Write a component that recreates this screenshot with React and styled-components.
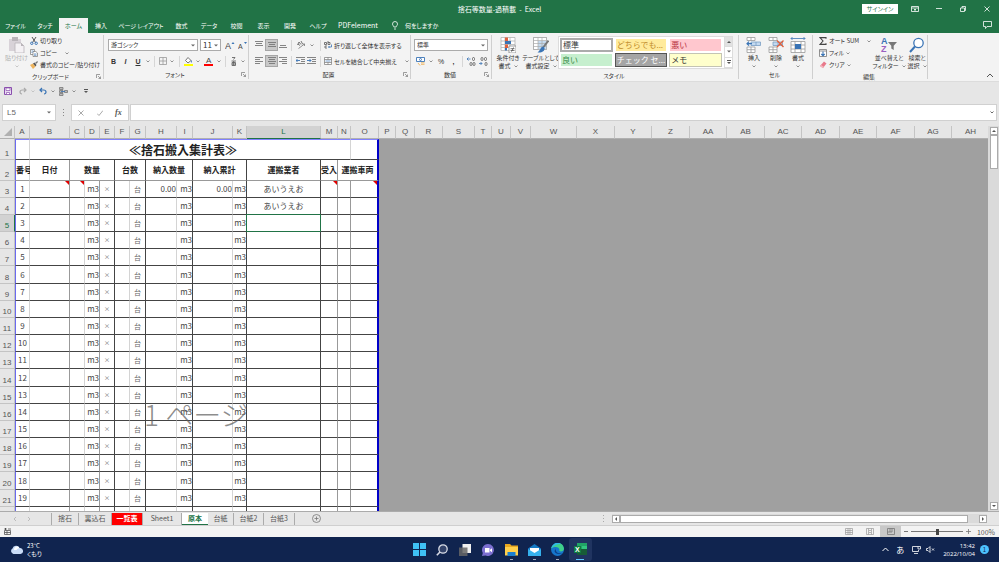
import React from "react";
import styled, { createGlobalStyle, css } from "styled-components";

const GlobalStyle = createGlobalStyle`
  * {
    box-sizing: border-box;
  }
  body {
    margin: 0;
    overflow: hidden;
    font-family: "Noto Sans CJK JP", sans-serif;
    font-size: 6px;
    font-feature-settings: "palt";
    color: #333;
  }
  button, input, select {
    margin: 0;
    padding: 0;
    border: 0;
    background: none;
    font: inherit;
    font-feature-settings: inherit;
    color: inherit;
    white-space: nowrap;
  }
`;

const Page = styled.div`
  display: flex;
  flex-direction: column;
  height: 100vh;
  background: #e6e6e6;
`;

/* ---------- title and tabs ---------- */

const TitleBar = styled.header`
  display: grid;
  grid-template-columns: 1fr auto 1fr;
  align-items: center;
  height: 17px;
  flex-shrink: 0;
  background: #217346;
  color: white;
`;
const Title = styled.h1`
  margin: 0;
  font-size: 7px;
  line-height: 16px;
  font-weight: 400;
  grid-column: 2;
  white-space: pre;
`;
const WindowControls = styled.div`
  display: flex;
  align-items: center;
  justify-content: flex-end;
`;
const SignIn = styled.button`
  width: 36px;
  height: 10px;
  margin-right: 5px;
  background: white;
  color: #217346;
  line-height: 10px;
`;
const WindowButton = styled.button`
  display: flex;
  justify-content: center;
  width: 24px;
`;
const TabBar = styled.nav`
  display: flex;
  align-items: stretch;
  height: 16px;
  flex-shrink: 0;
  background: #217346;
  color: white;
`;
const Tab = styled.button`
  width: ${(props) => props.$width}px;
  margin-top: 1px;
  font-size: ${(props) => (props.$latin ? 7 : 6)}px;
  line-height: 15px;
  text-align: center;
  ${(props) =>
    props.$active &&
    css`
      background: #f3f3f3;
      color: #217346;
    `}
`;
const TellMe = styled.button`
  display: flex;
  align-items: center;
  gap: 6px;
  margin-left: 8px;
`;
const CommentButton = styled.button`
  display: flex;
  align-items: center;
  margin: 0 7px 0 auto;
`;

/* ---------- ribbon ---------- */

const Ribbon = styled.section`
  display: flex;
  height: 49px;
  flex-shrink: 0;
  padding: 2px 0;
  background: #f3f3f3;
  border-bottom: 1px solid #dcdcdc;
`;
const GroupBox = styled.div`
  display: flex;
  flex-direction: column;
  width: ${(props) => props.$width}px;
  flex-shrink: 0;
  border-right: 1px solid #cfcfcf;
`;
const GroupBody = styled.div`
  display: flex;
  height: 37px;
  padding-left: ${(props) => props.$pad || 0}px;
`;
const GroupLabel = styled.div`
  display: grid;
  grid-template-columns: 1fr auto 1fr;
  align-items: center;
  justify-items: end;
  height: 10px;
  padding: 1px 2px 0 0;
  line-height: 9px;
  span {
    grid-column: 2;
  }
`;
const BigButton = styled.button`
  display: flex;
  flex-direction: column;
  align-items: center;
  width: ${(props) => props.$width}px;
  padding-top: 2px;
  line-height: 8px;
  color: ${(props) => (props.$off ? "#b0b0b0" : "#333")};
  svg {
    flex-shrink: 0;
  }
  > svg:last-child {
    margin-top: 3px;
  }
`;
const Line = styled.span`
  display: flex;
  align-items: center;
  gap: 3px;
  &:nth-child(2) {
    margin-top: 1px;
  }
`;
const Stack = styled.div`
  display: flex;
  flex-direction: column;
`;
const SmallButton = styled.button`
  display: flex;
  align-items: center;
  gap: 2px;
  height: 12px;
  line-height: 12px;
`;
const TwoRows = styled.div`
  display: flex;
  flex-direction: column;
  padding-top: 2px;
`;
const Row = styled.div`
  display: flex;
  align-items: center;
  height: 16px;
`;
const Tool = styled.button`
  display: flex;
  align-items: center;
  justify-content: center;
  width: ${(props) => props.$width || 13}px;
  height: 12px;
  font-family: "Liberation Sans", sans-serif;
  font-size: 7px;
  ${(props) =>
    props.$on &&
    css`
      background: #c8c8c8;
      border: 1px solid #a5a5a5;
    `}
`;
const WideTool = styled.button`
  display: flex;
  align-items: center;
  gap: 2px;
  height: 12px;
`;
const Gap = styled.span`
  width: 4px;
`;
const Divider = styled.span`
  width: 1px;
  height: 11px;
  margin: 0 3px;
  background: #d6d6d6;
`;
const Picker = styled.label`
  position: relative;
  width: ${(props) => props.$width}px;
  height: 12px;
  margin-right: 2px;
  background: white;
  border: 1px solid #ababab;
  select {
    display: block;
    width: 100%;
    height: 10px;
    padding: 0 2px;
    appearance: none;
    font-size: ${(props) => props.$size || 6}px;
    line-height: 10px;
  }
  svg {
    position: absolute;
    right: 2px;
    top: 4px;
  }
`;
const Gallery = styled.div`
  display: grid;
  grid-template-columns: 1fr 1fr 1fr 8px;
  grid-template-rows: 14px 14px;
  column-gap: 2px;
  row-gap: 1px;
  width: 175px;
  height: 33px;
  margin-top: 1px;
  padding: 1px 0 1px 1px;
  background: white;
  border: 1px solid #dcdcdc;
`;
const Swatch = styled.button`
  padding: 0 0 1px 1px;
  background: ${(props) => props.$bg};
  color: ${(props) => props.$color};
  border: ${(props) => props.$border || "1px solid white"};
  font-size: 8px;
  font-feature-settings: normal;
  line-height: 10px;
  text-align: left;
`;
const GalleryArrows = styled.div`
  grid-column: 4;
  grid-row: 1 / 3;
  display: flex;
  flex-direction: column;
  margin: -1px 0;
  border-left: 1px solid #dcdcdc;
  button {
    display: flex;
    flex: 1;
    align-items: center;
    justify-content: center;
    border-bottom: 1px solid #dcdcdc;
  }
  button:first-child {
    background: #e1e1e1;
  }
`;
const Collapse = styled.button`
  display: flex;
  align-self: flex-end;
  margin: 0 5px 1px auto;
`;

/* ---------- quick access and formula bar ---------- */

const QuickBar = styled.div`
  display: flex;
  align-items: center;
  gap: 4px;
  height: 18px;
  flex-shrink: 0;
  padding-left: 4px;
  button {
    display: flex;
    align-items: center;
    gap: 4px;
  }
  button:first-child {
    margin-right: 3px;
  }
  button:last-child {
    margin-left: 4px;
  }
`;
const FormulaBar = styled.div`
  display: flex;
  align-items: center;
  height: 26px;
  flex-shrink: 0;
  padding: 4px 2px 5px 2px;
`;
const NameBox = styled.label`
  display: flex;
  align-items: center;
  width: 54px;
  height: 17px;
  padding: 0 4px;
  background: white;
  border: 1px solid #d0d0d0;
  input {
    flex: 1;
    min-width: 0;
    font-family: "Liberation Sans", sans-serif;
    font-size: 8px;
    color: #666;
  }
`;
const Dots = styled.span`
  display: flex;
  justify-content: center;
  width: 15px;
`;
const FormulaButtons = styled.div`
  display: flex;
  align-items: center;
  justify-content: space-around;
  width: 58px;
  height: 17px;
  margin-right: 1px;
  background: white;
  border: 1px solid #d0d0d0;
  button {
    display: flex;
  }
  button:last-child {
    font: italic bold 8px "Liberation Serif", serif;
    color: #555;
  }
`;
const FormulaInput = styled.label`
  display: flex;
  align-items: center;
  flex: 1;
  height: 17px;
  padding-right: 2px;
  background: white;
  border: 1px solid #d0d0d0;
  input {
    flex: 1;
    font-size: 8px;
  }
`;

/* ---------- sheet ---------- */

const SheetArea = styled.main`
  display: flex;
  flex: 1;
  min-height: 0;
`;
const SheetView = styled.div`
  position: relative;
  flex: 1;
  min-width: 0;
  overflow: hidden;
  background: #a0a0a0;
`;
const Table = styled.table`
  width: ${(props) => props.$width}px;
  table-layout: fixed;
  border-collapse: separate;
  border-spacing: 0;
  font-size: 8px;
  font-feature-settings: normal;
  line-height: 10px;
  color: #444;
`;
const ColHead = styled.th`
  height: 13px;
  padding: 0;
  background: ${(props) => (props.$active ? "#d2d2d2" : "#e6e6e6")};
  border-right: 1px solid #c4c4c4;
  border-bottom: 1px solid ${(props) => (props.$active ? "#217346" : "#b0b0b0")};
  color: ${(props) => (props.$active ? "#217346" : "#555")};
  font-family: "Liberation Sans", sans-serif;
  font-weight: 400;
  svg {
    display: block;
    margin-left: 4px;
  }
`;
const RowHead = styled.th`
  padding: 0 0 1px;
  background: ${(props) => (props.$active ? "#d2d2d2" : "#e6e6e6")};
  border-right: 1px solid ${(props) => (props.$active ? "#217346" : "#c4c4c4")};
  border-bottom: 1px solid #c4c4c4;
  color: ${(props) => (props.$active ? "#217346" : "#555")};
  font-family: "Liberation Sans", sans-serif;
  font-weight: 400;
  line-height: 9px;
  vertical-align: bottom;
`;
const SheetRow = styled.tr`
  height: ${(props) => props.$height}px;
`;
const lines = {
  light: "1px solid #d4d4d4",
  mid: "1px solid #999",
  dark: "1px solid #444",
  blue: "2px solid #0000c8",
};
const Cell = styled.td`
  position: relative;
  padding: 0;
  background: white;
  text-align: ${(props) => props.$align || "center"};
  border-right: ${(props) => lines[props.$line]};
  border-bottom: ${(props) => lines[props.$bottom || "dark"]};
  white-space: nowrap;
  ${(props) =>
    props.$first &&
    css`
      border-left: 1px solid #6a6af0;
    `}
  ${(props) =>
    props.$top &&
    css`
      border-top: 1px solid #8080ff;
    `}
  ${(props) =>
    props.$bold &&
    css`
      color: #222;
      font-weight: 700;
    `}
  ${(props) =>
    props.$small &&
    css`
      color: #666;
      font-size: ${props.$small}px;
    `}
  ${(props) =>
    props.$active &&
    css`
      border-color: #217346;
      box-shadow: -1px 0 #217346, 0 -1px #217346, -1px -1px #217346;
      z-index: 1;
    `}
`;
const TitleCell = styled(Cell)`
  padding-right: 14px;
  font-size: 12px;
  line-height: 16px;
`;
const Note = styled.span`
  position: absolute;
  top: 0;
  right: 0;
  border-top: 4px solid #e00000;
  border-left: 4px solid transparent;
`;
const PageMark = styled.div`
  position: absolute;
  left: 144px;
  top: 274px;
  width: 104px;
  overflow: hidden;
  font-size: 28px;
  font-weight: 300;
  font-feature-settings: normal;
  line-height: 28px;
  white-space: nowrap;
  color: rgba(90, 90, 90, 0.7);
  pointer-events: none;
`;
const VScroll = styled.div`
  display: flex;
  flex-direction: column;
  width: 11px;
  padding: 1px 2px;
  background: #dadada;
`;
const ScrollButton = styled.button`
  display: flex;
  align-items: center;
  justify-content: center;
  width: 8px;
  height: 8px;
  background: white;
  border: 1px solid #ababab;
`;
const VThumb = styled.div`
  width: 8px;
  height: 34px;
  margin-bottom: auto;
  background: white;
  border: 1px solid #ababab;
`;

/* ---------- sheet tabs and status ---------- */

const SheetTabs = styled.div`
  display: flex;
  align-items: center;
  height: 15px;
  flex-shrink: 0;
  padding-right: 12px;
  border-top: 1px solid #ababab;
  border-bottom: 1px solid #cfcfcf;
`;
const TabArrows = styled.div`
  display: flex;
  align-items: center;
  gap: 10px;
  width: 52px;
  height: 12px;
  padding-left: 13px;
  border-right: 1px solid #ababab;
`;
const SheetTab = styled.button`
  width: ${(props) => props.$width}px;
  height: 12px;
  border-right: 1px solid #ababab;
  font-size: 7px;
  line-height: 11px;
  color: #555;
  ${(props) =>
    props.$red &&
    css`
      background: #ff0000;
      color: white;
      font-weight: 700;
    `}
  ${(props) =>
    props.$active &&
    css`
      background: white;
      color: #217346;
      font-weight: 700;
      border-right: 0;
      border-bottom: 1px solid #217346;
    `}
`;
const AddSheet = styled.button`
  display: flex;
  margin: 0 auto 0 17px;
`;
const HScroll = styled.div`
  display: flex;
  align-items: center;
  width: 38%;
  height: 9px;
  background: #dadada;
`;
const HThumb = styled.div`
  flex: 1;
  height: 8px;
  margin-right: 11px;
  background: white;
  border: 1px solid #ababab;
`;
const StatusBar = styled.footer`
  display: flex;
  align-items: center;
  height: 11px;
  flex-shrink: 0;
  padding: 0 4px;
  background: #f3f3f3;
`;
const MacroButton = styled.button`
  display: flex;
  margin-right: auto;
`;
const ViewButton = styled.button`
  display: flex;
  align-items: center;
  justify-content: center;
  width: 21px;
  height: 11px;
  background: ${(props) => (props.$on ? "#c8c8c8" : "none")};
`;
const ZoomButton = styled.button`
  display: flex;
  padding-left: ${(props) => props.$pad || 0}px;
`;
const Zoom = styled.input`
  width: 52px;
  height: 9px;
  margin: 0 3px;
  appearance: none;
  background: linear-gradient(#777, #777) center / 100% 1px no-repeat;
  &::-webkit-slider-thumb {
    appearance: none;
    width: 3px;
    height: 6px;
    background: #444;
  }
`;
const ZoomText = styled.span`
  width: 24px;
  font-size: 7px;
  line-height: 10px;
  text-align: right;
  color: #555;
`;

/* ---------- taskbar ---------- */

const Taskbar = styled.footer`
  display: grid;
  grid-template-columns: 1fr auto 1fr;
  align-items: center;
  height: 25px;
  flex-shrink: 0;
  background: #10244f;
  color: white;
`;
const Weather = styled.div`
  display: flex;
  align-items: center;
  gap: 4px;
  padding-left: 10px;
  line-height: 8px;
`;
const Apps = styled.div`
  display: flex;
`;
const TaskButton = styled.button`
  display: flex;
  align-items: center;
  justify-content: center;
  position: relative;
  width: 23px;
  height: 23px;
  border-radius: 3px;
  background: ${(props) => (props.$active ? "#203460" : "none")};
  &::after {
    content: "";
    position: absolute;
    bottom: 1px;
    width: ${(props) => (props.$active ? 8 : 3)}px;
    height: 1px;
    background: ${(props) => (props.$active ? "#5cc8ff" : props.$open ? "#a0a8b8" : "none")};
  }
`;
const Tray = styled.div`
  display: flex;
  align-items: center;
  justify-content: flex-end;
  gap: 5px;
  padding-right: 10px;
`;
const Ime = styled.span`
  margin: 0 3px 0 2px;
  font-size: 8px;
`;
const Clock = styled.div`
  margin-left: 3px;
  font-family: "Open Sans", sans-serif;
  line-height: 8px;
  text-align: right;
`;
const Badge = styled.span`
  width: 9px;
  height: 9px;
  border-radius: 50%;
  background: #4cc2ff;
  color: #10244f;
  line-height: 9px;
  text-align: center;
`;

/* ---------- icons ---------- */

const Icon = ({ size = 8, width, height, children, ...rest }) => (
  <svg
    width={width || size}
    height={height || size}
    viewBox={`0 0 ${width || size} ${height || size}`}
    fill="none"
    stroke="#555"
    aria-hidden="true"
    {...rest}
  >
    {children}
  </svg>
);
const Letter = styled.text`
  font-family: "Liberation Sans", sans-serif;
  font-size: ${(props) => props.$size}px;
  font-weight: ${(props) => (props.$bold ? 700 : 400)};
  fill: ${(props) => props.$color || "#444"};
  stroke: none;
`;
const Chevron = ({ color = "#777" }) => (
  <Icon width={4} height={3} stroke={color}>
    <path d="M.5 .5L2 2L3.500 .5" strokeWidth=".8" />
  </Icon>
);
const Down = () => (
  <Icon width={4} height={3} stroke="none">
    <path d="M0 .5H4L2 2.500Z" fill="#666" />
  </Icon>
);
const Launcher = () => (
  <Icon size={5} stroke="#777" strokeWidth=".7">
    <path d="M.5 4V.5H4M2 2L4.500 4.500M4.500 2.500V4.500H2.500" />
  </Icon>
);
const PasteIcon = () => (
  <Icon size={16} stroke="none">
    <path d="M0 2H12V14H0Z" fill="#d8d2d8" />
    <path d="M3 0H9V4H3Z" fill="#b9b4b9" />
    <path d="M6 6H12L15 9V16H6Z" fill="#f4f1f4" stroke="#b9b4b9" strokeWidth=".8" />
    <path d="M12 6V9H15Z" fill="#b9b4b9" />
  </Icon>
);
const ScissorsIcon = () => (
  <Icon strokeWidth="1">
    <path d="M2 0L5.500 5.500M6 0L2.500 5.500" />
    <circle cx="1.800" cy="6.300" r="1.200" stroke="#3a74b5" />
    <circle cx="6.200" cy="6.300" r="1.200" stroke="#3a74b5" />
  </Icon>
);
const CopyIcon = () => (
  <Icon strokeWidth=".7" stroke="#777">
    <path d="M.5 .5H4.500V5.500H.5Z" fill="white" />
    <path d="M3 2.500H5.800L7.500 4V7.500H3Z" fill="white" />
    <path d="M1.500 2H3.500M1.500 3.500H2.500M4 5H6.500M4 6.300H6.500" stroke="#3a74b5" />
  </Icon>
);
const BrushIcon = () => (
  <Icon stroke="none">
    <path d="M0 4L3 2.500L5.500 5.500L3 8Z" fill="#edb35c" />
    <path d="M3 2.500L4.500 1.500L6.500 4L5.500 5.500Z" fill="#555" />
    <path d="M5 2L7.200 0L8 1L6 3Z" fill="#777" />
  </Icon>
);
const FillIcon = () => (
  <Icon size={9} strokeWidth=".8">
    <path d="M4 .5L7 3.500L4 6L1.500 3.500Z" fill="white" />
    <path d="M7.500 3.500V5.500" stroke="#3a74b5" />
    <path d="M0 7H9V9H0Z" fill="#ffff00" stroke="none" />
  </Icon>
);
const FontColorIcon = () => (
  <Icon size={9}>
    <Letter $size={8} x="2" y="6">A</Letter>
    <path d="M0 7H9V9H0Z" fill="#ff0000" stroke="none" />
  </Icon>
);
const BordersIcon = () => (
  <Icon stroke="#999" strokeWidth=".8">
    <path d="M.5 .5H7.500V7.500H.5ZM4 .5V7.500M.5 4H7.500" />
  </Icon>
);
const GrowIcon = ({ down }) => (
  <Icon width={10} height={9}>
    <Letter $size={down ? 7 : 9} x="0" y="8">A</Letter>
    <path d={down ? "M6 1H9L7.500 3Z" : "M6.500 3H9.500L8 1Z"} fill="#3a74b5" stroke="none" />
  </Icon>
);
const RubyIcon = () => (
  <Icon size={9} strokeWidth=".8">
    <path d="M3 .5H6L4.500 2.500M2.500 4H7M3 5.500H6.500V8.500H3ZM3 7H6.500M4.700 4V8.500" />
  </Icon>
);
// bars: list of [x, width] from top to bottom
const BarsIcon = ({ bars, y = 0 }) => (
  <Icon stroke="#777">
    {bars.map(([x, w], i) => (
      <path key={i} d={`M${x} ${y + i * 2 + 0.5}h${w}`} strokeWidth=".9" />
    ))}
  </Icon>
);
const AngleIcon = () => (
  <Icon strokeWidth=".8">
    <path d="M1.500 7.500L7.500 3M7.500 3V5M7.500 3H5.500" stroke="#777" />
    <path d="M.5 4L2 1L4 3.500M1 3L3 4.500M4 0L5.500 3" />
  </Icon>
);
const WrapIcon = () => (
  <Icon strokeWidth=".8">
    <path d="M.5 1.500H2.500V3.500H.5ZM4 0V3.500H6V1.500H4M3 5H1V7H3" />
    <path d="M7.500 3.500V6H4.500M5.500 5L4.500 6L5.500 7" stroke="#3a74b5" />
  </Icon>
);
const MergeIcon = () => (
  <Icon strokeWidth=".7" stroke="#777">
    <path d="M.5 .5H7.500V7.500H.5ZM.5 2.500H7.500M.5 5.500H7.500M4 .5V2.500M4 5.500V7.500" fill="white" />
    <path d="M1.500 4H6.500" stroke="#3a74b5" />
  </Icon>
);
const IndentIcon = ({ out }) => (
  <Icon width={9} height={8} stroke="#777" strokeWidth=".9">
    <path d="M0 .5H9M5 2.500H9M5 4.500H9M0 6.500H9" />
    <path d={out ? "M4 3.500H0M1.500 2L0 3.500L1.500 5" : "M0 3.500H4M2.500 2L4 3.500L2.500 5"} stroke="#3a74b5" />
  </Icon>
);
const MoneyIcon = () => (
  <Icon size={9} strokeWidth=".9">
    <path d="M.5 .5H8.500V4.500H.5Z" stroke="#3a74b5" fill="white" />
    <circle cx="4.500" cy="2.500" r="1" stroke="#3a74b5" />
    <path d="M5 5.800H8.500M5 7.300H8.500M2 6L4 8.500" stroke="#edb35c" />
  </Icon>
);
const DecimalIcon = ({ less }) => (
  <Icon size={9} strokeWidth=".8">
    <path d={less ? "M0 6.500H3M1.500 5L3 6.500L1.500 8" : "M3.500 2H0M1.500 .5L0 2L1.500 3.500"} stroke="#3a74b5" />
    <rect x="5.500" y=".5" width="2" height="3" rx="1" />
    <rect x="6" y="5.500" width="2" height="3" rx="1" />
    {less ? (
      <rect x="2" y=".5" width="2" height="3" rx="1" />
    ) : (
      <rect x="3" y="5.500" width="2" height="3" rx="1" />
    )}
  </Icon>
);
const CondIcon = () => (
  <Icon size={16} strokeWidth=".7" stroke="#aaa">
    <path d="M1 .5H15V13.500H1ZM5 .5V13.500M10 .5V13.500M1 4H15M1 7.500H15M1 10.500H15" fill="white" />
    <path d="M5 .5H8V4H5ZM5 7.500H8V11H5Z" fill="#e0603c" stroke="none" />
    <path d="M5 4H11V7H5ZM5 11H7V13.500H5Z" fill="#3a74b5" stroke="none" />
    <path d="M9 9H16V16H9Z" fill="white" stroke="#777" />
    <path d="M10.500 11.700H14.500M10.500 13.500H14.500M13.500 10.500L11.500 14.700" stroke="#444" />
  </Icon>
);
const TableIcon = () => (
  <Icon size={16} strokeWidth=".7" stroke="#aaa">
    <path d="M.5 .5H13.500V12.500H.5Z" fill="white" />
    <path d="M5 4H13.500V12.500H5Z" fill="#c4daf0" stroke="none" />
    <path d="M.5 .5H13.500V12.500H.5ZM5 .5V12.500M9 .5V12.500M.5 3.500H13.500M.5 6.500H13.500M.5 9.500H13.500" />
    <path d="M15.500 3.500L10.500 10" stroke="#777" strokeWidth="2" />
    <path d="M10.500 9.500C7 10 8 13 4.500 15.500C9 16 12 14 11.500 11Z" fill="#3a74b5" stroke="none" />
  </Icon>
);
const CellsIcon = ({ kind }) => (
  <Icon size={16} strokeWidth=".8" stroke="#999">
    {kind === "format" ? (
      <>
        <path d="M1 4.500H15V15.500H1ZM5 4.500V15.500M11 4.500V15.500M1 8H15M1 12H15" fill="white" />
        <path d="M5 7H11V12H5Z" fill="#3a74b5" stroke="none" />
        <path d="M1 1.500H15M2.500 0L1 1.500L2.500 3M13.500 0L15 1.500L13.500 3" stroke="#3a74b5" />
      </>
    ) : (
      <>
        <path d="M1 .5H9V3.500H1ZM5 .5V3.500M1 10H9V15.500H1ZM5 10V15.500M1 12.700H9" fill="white" />
        <path d="M5 5H14.500V8.500H5ZM10 5V8.500" fill="#c4daf0" stroke="#7a9ec4" />
        {kind === "insert" ? (
          <path d="M6 6.700H1M3 4.700L1 6.700L3 8.700" stroke="#3a74b5" strokeWidth="1.200" />
        ) : (
          <path d="M9 3.500L15.500 10M15.500 3.500L9 10" stroke="#e0603c" strokeWidth="1.400" />
        )}
      </>
    )}
  </Icon>
);
const SigmaIcon = () => (
  <Icon>
    <path d="M7 1.800V.6H1L4 4L1 7.400H7V6.200" stroke="#444" strokeWidth="1.100" />
  </Icon>
);
const FillDownIcon = () => (
  <Icon strokeWidth=".8" stroke="#777">
    <path d="M.5 .5H7.500V7.500H.5ZM.5 2H7.500" fill="white" />
    <path d="M4 2.500V6.500M2.300 5L4 6.700L5.700 5" stroke="#3a74b5" strokeWidth="1.100" />
  </Icon>
);
const EraserIcon = () => (
  <Icon stroke="none">
    <path d="M5 .5L7.500 2.500L4 7L1 5Z" fill="#e8788a" />
    <path d="M2 3.800L5 6L4 7.300L1 5.200Z" fill="#f4b3bc" />
  </Icon>
);
const SortIcon = () => (
  <Icon size={16}>
    <Letter $size={9} $bold $color="#3a74b5" x="0" y="7">A</Letter>
    <Letter $size={9} $bold $color="#9a5fc0" x="0" y="15">Z</Letter>
    <path d="M7 5H16L12.700 8.700V13L10.300 11.500V8.700Z" fill="#777" stroke="none" />
  </Icon>
);
const FindIcon = () => (
  <Icon size={16} stroke="#3a74b5">
    <circle cx="9.500" cy="6" r="4.700" strokeWidth="1.300" fill="white" />
    <path d="M6 9.500L1 15" strokeWidth="2" />
  </Icon>
);
const SaveIcon = () => (
  <Icon stroke="#8a4fae">
    <path d="M.5 .5H7.500V7.500H.5Z" fill="#e9dcf2" />
    <path d="M2 1H6V3.500H2ZM2.500 5.500H5.500V7.500H2.500Z" fill="white" strokeWidth=".7" />
  </Icon>
);
const TurnIcon = ({ color, flip }) => (
  <Icon stroke={color} strokeWidth="1.200">
    <path d={flip ? "M7 3H3.500C0 3 .5 7 3 7M5 1L7 3L5 5" : "M1 3H4.500C8 3 7.500 7 5 7M3 1L1 3L3 5"} />
  </Icon>
);
const MoreIcon = () => (
  <Icon size={9} strokeWidth=".8" stroke="#777">
    <path d="M.5 .5H4V2.500H.5ZM.5 6.500H4V8.500H.5ZM.5 3.500H4V5.500H.5ZM5.500 3.500H8.500V5.500H5.500Z" fill="#bbb" />
    <path d="M6 4.500H2" stroke="#3a74b5" />
  </Icon>
);
const ScrollArrow = ({ d }) => (
  <Icon size={4} stroke="none">
    <path d={d} fill="#555" />
  </Icon>
);

/* ---------- data ---------- */

const tabs = [
  ["ファイル", 31],
  ["タッチ", 28],
  ["ホーム", 29],
  ["挿入", 26],
  ["ページ レイアウト", 54],
  ["数式", 27],
  ["データ", 28],
  ["校閲", 27],
  ["表示", 27],
  ["開発", 26],
  ["ヘルプ", 30],
  ["PDFelement", 50],
];

const columns = [
  ["A", 15], ["B", 40], ["C", 15], ["D", 15], ["E", 15], ["F", 15], ["G", 16],
  ["H", 31], ["I", 16], ["J", 40], ["K", 14], ["L", 74], ["M", 17], ["N", 13],
  ["O", 28], ["P", 17], ["Q", 19], ["R", 28], ["S", 32], ["T", 17], ["U", 19],
  ["V", 20], ["W", 46], ["X", 38], ["Y", 37], ["Z", 38], ["AA", 37], ["AB", 38],
  ["AC", 37], ["AD", 38], ["AE", 37], ["AF", 38], ["AG", 37], ["AH", 38],
];
const tableWidth = columns.reduce((sum, col) => sum + col[1], 15);

const rows = Array.from({ length: 19 }, (_, i) => ({
  number: i + 3,
  index: i + 1,
  height: i % 6 === 5 ? 18 : 17,
  amount: i === 0 ? "0.00" : "",
  carrier: i < 2 ? "あいうえお" : "",
  unit: "m3",
  sign: "×",
  truck: "台",
}));
// the next row is empty and runs under the sheet tabs
rows.push({ height: 17 });

const swatches = [
  ["標準", "white", "#333", "2px solid #ababab"],
  ["どちらでも...", "#ffeb9c", "#c08a28"],
  ["悪い", "#ffc7ce", "#b8303c"],
  ["良い", "#c6efce", "#3a8a48"],
  ["チェック セ...", "#a5a5a5", "white", "1px solid #555"],
  ["メモ", "#ffffcc", "#333", "1px solid #c4c4b4"],
];

const sheets = [
  ["捨石", 27],
  ["裏込石", 33],
  ["一覧表", 31],
  ["Sheet1", 39],
  ["原本", 26],
  ["台紙", 26],
  ["台紙2", 30],
  ["台紙3", 31],
];

/* ---------- components ---------- */

const Group = ({ label, width, pad, launcher, children }) => (
  <GroupBox $width={width}>
    <GroupBody $pad={pad}>{children}</GroupBody>
    <GroupLabel>
      <span>{label}</span>
      {launcher && <Launcher />}
    </GroupLabel>
  </GroupBox>
);

const RibbonBar = () => (
  <Ribbon>
    <Group label="クリップボード" width={104} pad={3} launcher>
      <BigButton $width={27} $off>
        <PasteIcon />
        <Line>貼り付け</Line>
        <Chevron color="#bbb" />
      </BigButton>
      <Stack>
        <SmallButton><ScissorsIcon />切り取り</SmallButton>
        <SmallButton><CopyIcon />コピー<Gap /><Chevron /></SmallButton>
        <SmallButton><BrushIcon />書式のコピー/貼り付け</SmallButton>
      </Stack>
    </Group>
    <Group label="フォント" width={145} pad={4} launcher>
      <TwoRows>
        <Row>
          <Picker $width={90}>
            <select aria-label="フォント"><option>游ゴシック</option></select>
            <Down />
          </Picker>
          <Picker $width={21} $size={8}>
            <select aria-label="サイズ"><option>11</option></select>
            <Down />
          </Picker>
          <Tool><GrowIcon /></Tool>
          <Tool><GrowIcon down /></Tool>
        </Row>
        <Row>
          <Tool $width={11}><b>B</b></Tool>
          <Tool><b><i>I</i></b></Tool>
          <Tool $width={12}><b><u>U</u></b></Tool>
          <Tool $width={7}><Chevron /></Tool>
          <Divider />
          <Tool $width={10}><BordersIcon /></Tool>
          <Tool $width={8}><Chevron /></Tool>
          <Divider />
          <Tool $width={11}><FillIcon /></Tool>
          <Tool $width={8}><Chevron /></Tool>
          <Tool><FontColorIcon /></Tool>
          <Tool $width={7}><Chevron /></Tool>
          <Divider />
          <Tool $width={9}><RubyIcon /></Tool>
          <Tool $width={9}><Chevron /></Tool>
        </Row>
      </TwoRows>
    </Group>
    <Group label="配置" width={162} pad={3} launcher>
      <TwoRows>
        <Row>
          <Tool><BarsIcon bars={[[0, 8], [1, 6], [0, 8]]} /></Tool>
          <Tool $on><BarsIcon bars={[[0, 8], [1, 6], [0, 8]]} y={1} /></Tool>
          <Tool $width={10}><BarsIcon bars={[[1, 6], [0, 8]]} y={4} /></Tool>
          <Divider />
          <Tool $width={11}><AngleIcon /></Tool>
          <Tool $width={11}><Chevron /></Tool>
          <Divider />
          <WideTool><WrapIcon />折り返して全体を表示する</WideTool>
        </Row>
        <Row>
          <Tool><BarsIcon bars={[[0, 8], [0, 5], [0, 8], [0, 5]]} /></Tool>
          <Tool $on><BarsIcon bars={[[0, 8], [1, 6], [0, 8], [1, 6]]} /></Tool>
          <Tool $width={10}><BarsIcon bars={[[0, 8], [3, 5], [0, 8], [3, 5]]} /></Tool>
          <Divider />
          <Tool $width={11}><IndentIcon out /></Tool>
          <Tool $width={11}><IndentIcon /></Tool>
          <Divider />
          <WideTool><MergeIcon />セルを結合して中央揃え<Gap /><Chevron /></WideTool>
        </Row>
      </TwoRows>
    </Group>
    <Group label="数値" width={81} pad={3} launcher>
      <TwoRows>
        <Row>
          <Picker $width={74}>
            <select aria-label="表示形式"><option>標準</option></select>
            <Down />
          </Picker>
        </Row>
        <Row>
          <Tool><MoneyIcon /></Tool>
          <Tool $width={7}><Chevron /></Tool>
          <Tool $width={14}>%</Tool>
          <Tool $width={11}><b>,</b></Tool>
          <Divider />
          <Tool $width={10}><DecimalIcon /></Tool>
          <Tool $width={14}><DecimalIcon less /></Tool>
        </Row>
      </TwoRows>
    </Group>
    <Group label="スタイル" width={247}>
      <BigButton $width={32}>
        <CondIcon />
        <Line>条件付き</Line>
        <Line>書式<Chevron /></Line>
      </BigButton>
      <BigButton $width={34}>
        <TableIcon />
        <Line>テーブルとして</Line>
        <Line>書式設定<Chevron /></Line>
      </BigButton>
      <Gallery>
        {swatches.map(([name, bg, color, border]) => (
          <Swatch key={name} $bg={bg} $color={color} $border={border}>
            {name}
          </Swatch>
        ))}
        <GalleryArrows>
          <button aria-label="前の行"><ScrollArrow d="M0 3H4L2 1Z" /></button>
          <button aria-label="次の行"><Down /></button>
          <button aria-label="その他"><ScrollArrow d="M0 0H4V1H0ZM0 2H4L2 4Z" /></button>
        </GalleryArrows>
      </Gallery>
    </Group>
    <Group label="セル" width={74} pad={4}>
      <BigButton $width={22}>
        <CellsIcon kind="insert" />
        <Line>挿入</Line>
        <Chevron />
      </BigButton>
      <BigButton $width={22}>
        <CellsIcon kind="delete" />
        <Line>削除</Line>
        <Chevron />
      </BigButton>
      <BigButton $width={22}>
        <CellsIcon kind="format" />
        <Line>書式</Line>
        <Chevron />
      </BigButton>
    </Group>
    <Group label="編集" width={115} pad={6}>
      <Stack>
        <SmallButton><SigmaIcon />オート SUM<Gap /><Chevron /></SmallButton>
        <SmallButton><FillDownIcon />フィル<Chevron /></SmallButton>
        <SmallButton><EraserIcon />クリア<Chevron /></SmallButton>
      </Stack>
      <BigButton $width={36}>
        <SortIcon />
        <Line>並べ替えと</Line>
        <Line>フィルター<Chevron /></Line>
      </BigButton>
      <BigButton $width={20}>
        <FindIcon />
        <Line>検索と</Line>
        <Line>選択<Chevron /></Line>
      </BigButton>
    </Group>
    <Collapse aria-label="リボンを折りたたむ">
      <Icon width={8} height={5}><path d="M1 4L4 1L7 4" /></Icon>
    </Collapse>
  </Ribbon>
);

const DataRow = ({ row }) => {
  const first = row.index === 1;
  return (
    <SheetRow $height={row.height}>
      <RowHead $active={row.number === 5}>{row.number}</RowHead>
      <Cell $first $line="light">{row.index}</Cell>
      <Cell $line="mid">{first && <Note />}</Cell>
      <Cell $line="light">{first && <Note />}</Cell>
      <Cell $line="mid" $align="right">{row.unit}</Cell>
      <Cell $line="dark" $small={6}>{row.sign}</Cell>
      <Cell $line="light" />
      <Cell $line="dark" $small={7}>{row.truck}</Cell>
      <Cell $line="light" $align="right">{row.amount}</Cell>
      <Cell $line="dark" $align="right">{row.unit}</Cell>
      <Cell $line="light" $align="right">{row.amount}</Cell>
      <Cell $line="dark" $align="right">{row.unit}</Cell>
      <Cell $line="dark" $active={row.number === 5}>{row.carrier}</Cell>
      <Cell $line="mid">{first && <Note />}</Cell>
      <Cell $line="mid" />
      <Cell $line="blue">{first && <Note />}</Cell>
    </SheetRow>
  );
};

const Sheet = () => (
  <SheetView>
    <Table $width={tableWidth}>
      <colgroup>
        <col width={15} />
        {columns.map(([id, width]) => (
          <col key={id} width={width} />
        ))}
      </colgroup>
      <thead>
        <tr>
          <ColHead>
            <Icon stroke="none"><path d="M8 0V8H0Z" fill="#b0b0b0" /></Icon>
          </ColHead>
          {columns.map(([id]) => (
            <ColHead key={id} $active={id === "L"}>{id}</ColHead>
          ))}
        </tr>
      </thead>
      <tbody>
        <SheetRow $height={21}>
          <RowHead>1</RowHead>
          <Cell $first $top $line="light" />
          <TitleCell $top $bold $line="light" colSpan={13}>≪捨石搬入集計表≫</TitleCell>
          <Cell $top $line="blue" />
        </SheetRow>
        <SheetRow $height={21}>
          <RowHead>2</RowHead>
          <Cell $first $bold $line="light" $bottom="mid">番号</Cell>
          <Cell $bold $line="mid" $bottom="mid">日付</Cell>
          <Cell $bold $line="dark" $bottom="mid" colSpan={3}>数量</Cell>
          <Cell $bold $line="dark" $bottom="mid" colSpan={2}>台数</Cell>
          <Cell $bold $line="dark" $bottom="mid" colSpan={2}>納入数量</Cell>
          <Cell $bold $line="dark" $bottom="mid" colSpan={2}>納入累計</Cell>
          <Cell $bold $line="dark" $bottom="mid">運搬業者</Cell>
          <Cell $bold $line="mid" $bottom="mid">受入</Cell>
          <Cell $bold $line="blue" $bottom="mid" colSpan={2}>運搬車両</Cell>
        </SheetRow>
        {rows.map((row, i) => (
          <DataRow key={i} row={row} />
        ))}
      </tbody>
    </Table>
    <PageMark>1 ページ</PageMark>
  </SheetView>
);

const App = () => (
  <Page>
    <GlobalStyle />
    <TitleBar>
      <Title>捨石等数量-過積載  -  Excel</Title>
      <WindowControls>
        <SignIn>サインイン</SignIn>
        <WindowButton aria-label="リボンの表示オプション">
          <Icon width={8} height={6} stroke="white" strokeWidth=".8"><path d="M.5 .5H7.500V5.500H.5ZM.5 2H7.500M4 5V3M3 4L4 3L5 4" /></Icon>
        </WindowButton>
        <WindowButton aria-label="最小化">
          <Icon size={6} stroke="white" strokeWidth=".8"><path d="M0 2.500H6" /></Icon>
        </WindowButton>
        <WindowButton aria-label="元に戻す">
          <Icon size={6} stroke="white" strokeWidth=".8"><path d="M.5 2H4.500V5.500H.5ZM2 2V.5H5.500V4.500H4.500" /></Icon>
        </WindowButton>
        <WindowButton aria-label="閉じる">
          <Icon size={6} stroke="white" strokeWidth=".8"><path d="M.5 .5L5.500 5.500M5.500 .5L.5 5.500" /></Icon>
        </WindowButton>
      </WindowControls>
    </TitleBar>
    <TabBar>
      {tabs.map(([name, width]) => (
        <Tab key={name} $width={width} $active={name === "ホーム"} $latin={name === "PDFelement"}>
          {name}
        </Tab>
      ))}
      <TellMe>
        <Icon width={8} height={9} stroke="white" strokeWidth=".8">
          <path d="M2.800 6C2.800 4.800 1.500 4.500 1.500 3A2.500 2.500 0 0 1 6.500 3C6.500 4.500 5.200 4.800 5.200 6ZM3 8H5" />
        </Icon>
        何をしますか
      </TellMe>
      <CommentButton aria-label="コメント">
        <Icon width={9} height={8} stroke="white" strokeWidth=".8"><path d="M.5 .5H8.500V5.500H4L2.500 7.500V5.500H.5Z" /></Icon>
      </CommentButton>
    </TabBar>
    <RibbonBar />
    <QuickBar>
      <button aria-label="保存"><SaveIcon /></button>
      <button aria-label="やり直し"><TurnIcon color="#aaa" flip /><Chevron color="#bbb" /></button>
      <button aria-label="元に戻す"><TurnIcon color="#3a74b5" /><Chevron /></button>
      <button aria-label="セル"><MoreIcon /><Chevron /></button>
      <button aria-label="カスタマイズ"><ScrollArrow d="M0 0H4V1H0ZM0 2H4L2 4Z" /></button>
    </QuickBar>
    <FormulaBar>
      <NameBox>
        <input aria-label="名前ボックス" defaultValue="L5" />
        <Down />
      </NameBox>
      <Dots>
        <Icon width={2} height={7} stroke="none"><path d="M0 0H1V1H0ZM0 3H1V4H0ZM0 6H1V7H0Z" fill="#888" /></Icon>
      </Dots>
      <FormulaButtons>
        <button aria-label="キャンセル"><Icon size={6} stroke="#aaa"><path d="M.5 .5L5.500 5.500M5.500 .5L.5 5.500" /></Icon></button>
        <button aria-label="入力"><Icon size={6} stroke="#aaa"><path d="M0 3.500L2 5.500L6 .5" /></Icon></button>
        <button>fx</button>
      </FormulaButtons>
      <FormulaInput>
        <input aria-label="数式バー" />
        <Chevron color="#444" />
      </FormulaInput>
    </FormulaBar>
    <SheetArea>
      <Sheet />
      <VScroll>
        <ScrollButton aria-label="上へ"><ScrollArrow d="M0 3H4L2 1Z" /></ScrollButton>
        <VThumb />
        <ScrollButton aria-label="下へ"><ScrollArrow d="M0 1H4L2 3Z" /></ScrollButton>
      </VScroll>
    </SheetArea>
    <SheetTabs>
      <TabArrows>
        <Icon size={4} stroke="#bbb"><path d="M3 0L1 2L3 4" /></Icon>
        <Icon size={4} stroke="#bbb"><path d="M1 0L3 2L1 4" /></Icon>
      </TabArrows>
      {sheets.map(([name, width]) => (
        <SheetTab key={name} $width={width} $red={name === "一覧表"} $active={name === "原本"}>
          {name}
        </SheetTab>
      ))}
      <AddSheet aria-label="新しいシート">
        <Icon size={9} stroke="#777" strokeWidth=".8"><circle cx="4.500" cy="4.500" r="4" /><path d="M4.500 2.500V6.500M2.500 4.500H6.500" /></Icon>
      </AddSheet>
      <Dots>
        <Icon width={2} height={7} stroke="none"><path d="M0 0H1V1H0ZM0 3H1V4H0ZM0 6H1V7H0Z" fill="#aaa" /></Icon>
      </Dots>
      <HScroll>
        <ScrollButton aria-label="左へ"><ScrollArrow d="M3 0V4L1 2Z" /></ScrollButton>
        <HThumb />
        <ScrollButton aria-label="右へ"><ScrollArrow d="M1 0V4L3 2Z" /></ScrollButton>
      </HScroll>
    </SheetTabs>
    <StatusBar>
      <MacroButton aria-label="マクロの記録">
        <Icon width={7} height={7} strokeWidth=".8">
          <path d="M.5 2.500H6.500V6.500H.5ZM.5 4.500H6.500M3 2.500V6.500M4 1H7" />
          <circle cx="1.500" cy="1" r="1" fill="#444" stroke="none" />
        </Icon>
      </MacroButton>
      <ViewButton aria-label="標準"><Icon width={8} height={7} stroke="#999" strokeWidth=".7"><path d="M.5 .5H7.500V6.500H.5ZM.5 2.500H7.500M.5 4.500H7.500M3 .5V6.500M5 .5V6.500" /></Icon></ViewButton>
      <ViewButton aria-label="ページ レイアウト"><Icon width={8} height={7} stroke="#999" strokeWidth=".7"><path d="M.5 .5H7.500V6.500H.5ZM2.500 .5V6.500M5.500 .5V6.500M3 2.500H5M3 4.500H5" /></Icon></ViewButton>
      <ViewButton $on aria-label="改ページ プレビュー"><Icon width={8} height={7} stroke="#777" strokeWidth=".8"><path d="M.5 .5H7.500V6.500H.5ZM3 .5V4H.5M5 .5V4H3" /></Icon></ViewButton>
      <ZoomButton $pad={2} aria-label="縮小"><Icon size={5} stroke="#777"><path d="M1 2.500H5" /></Icon></ZoomButton>
      <Zoom type="range" aria-label="ズーム" min="0" max="100" defaultValue="50" />
      <ZoomButton aria-label="拡大"><Icon size={5} stroke="#777" strokeWidth=".8"><path d="M0 2.500H5M2.500 0V5" /></Icon></ZoomButton>
      <ZoomText>100%</ZoomText>
    </StatusBar>
    <Taskbar>
      <Weather>
        <Icon width={13} height={9} stroke="none">
          <path d="M3.500 9A3 3 0 0 1 2.500 3.500A3.700 3.700 0 0 1 9.500 3A3 3 0 0 1 10.500 9Z" fill="#c9dcf8" />
          <path d="M4 5A3 3 0 0 1 9.500 3C8 3 7 4 6.500 5Z" fill="white" />
        </Icon>
        <div>
          <div>23°C</div>
          <div>くもり</div>
        </div>
      </Weather>
      <Apps>
        <TaskButton aria-label="スタート">
          <Icon size={13} stroke="none"><path d="M0 0H6V6H0ZM7 0H13V6H7ZM0 7H6V13H0ZM7 7H13V13H7Z" fill="#3fc1f5" /></Icon>
        </TaskButton>
        <TaskButton aria-label="検索">
          <Icon size={12} stroke="#d8dce6"><circle cx="7" cy="5" r="4.200" strokeWidth="1.300" fill="#33436a" /><path d="M4 8L.8 11.200" strokeWidth="1.600" /></Icon>
        </TaskButton>
        <TaskButton aria-label="タスク ビュー">
          <Icon size={12} stroke="none"><path d="M3.500 0H12V9H3.500Z" fill="#f0f0f0" /><path d="M0 3.500H8.500V12H0Z" fill="#666" opacity=".85" /></Icon>
        </TaskButton>
        <TaskButton aria-label="チャット">
          <Icon size={12} stroke="none"><path d="M6 0A6 6 0 1 1 3.500 11.500L0 12L.8 9A6 6 0 0 1 6 0Z" fill="#7b6fd0" /><path d="M3 4H7.500V8.500H3ZM8 5.700L10 4.300V8.200L8 6.800Z" fill="white" /></Icon>
        </TaskButton>
        <TaskButton $open aria-label="エクスプローラー">
          <Icon width={13} height={12} stroke="none"><path d="M0 0H5L6.500 1.500H13V11H0Z" fill="#e8a820" /><path d="M0 3H13V11.500H0Z" fill="#ffd04c" /><path d="M2.500 8H10.500V12H2.500Z" fill="#1b7fd0" /></Icon>
        </TaskButton>
        <TaskButton $open aria-label="メール">
          <Icon width={13} height={12} stroke="none"><path d="M0 4.500L6.500 0L13 4.500V12H0Z" fill="#1479c4" /><path d="M2 4H11V9H2Z" fill="white" /><path d="M0 5L6.500 9L13 5V12H0Z" fill="#35b1ee" /></Icon>
        </TaskButton>
        <TaskButton $open aria-label="Edge">
          <Icon size={13} stroke="none">
            <circle cx="6.500" cy="6.500" r="6.500" fill="#1676cc" />
            <path d="M.2 5.500C1.500-1.500 12-2 13 5.500C13 9 9 9 8.200 7.800C9.500 5 5 2 .2 5.500Z" fill="#3fcf8a" />
            <path d="M.2 5.500C2-1 8-1 10 1C5 1 3 3 .2 5.500Z" fill="#30b8e8" />
            <path d="M5 5.500C4 9 7 11 11 10C9 11.500 4 11.500 3.500 8Z" fill="#0d3f86" />
          </Icon>
        </TaskButton>
        <TaskButton $active aria-label="Excel">
          <Icon size={13} stroke="none">
            <path d="M3 0H13V12H3Z" fill="#21a366" />
            <path d="M3 6H13V12H3Z" fill="#185c37" />
            <path d="M8 3H13V6H8Z" fill="#33c481" />
            <path d="M0 3H7V10H0Z" fill="#107c41" />
            <Letter $size={7} $bold $color="white" x="1" y="9">X</Letter>
          </Icon>
        </TaskButton>
      </Apps>
      <Tray>
        <Icon width={7} height={5} stroke="white"><path d="M.5 4L3.500 1L6.500 4" /></Icon>
        <Ime>あ</Ime>
        <Icon width={9} height={8} stroke="white" strokeWidth=".8"><path d="M6 .5H.5V5.500H6.500V4M2 7.500H6M6 .5H8.500V3H6Z" /></Icon>
        <Icon width={9} height={7} stroke="white" strokeWidth=".8"><path d="M.5 2.500H2L4 .5V6.500L2 4.500H.5ZM6 2.500L8 4.500M8 2.500L6 4.500" /></Icon>
        <Clock>
          <div>13:42</div>
          <div>2022/10/04</div>
        </Clock>
        <Badge>1</Badge>
      </Tray>
    </Taskbar>
  </Page>
);

export default App;
